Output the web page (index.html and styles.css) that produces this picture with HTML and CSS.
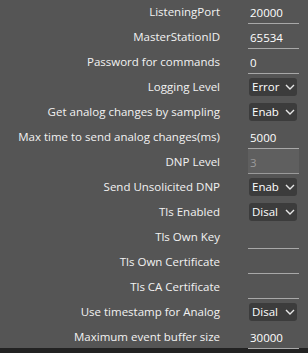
FILE: index.html
```html
<!DOCTYPE html>
<html lang="en">
<head>
  <meta charset="UTF-8">
  <title>DNP Settings</title>
  <link rel="stylesheet" href="styles.css">
</head>
<body>
  <div class="settings">
    <div class="row">
      <label>ListeningPort</label>
      <div class="field"><input class="text" type="text" value="20000"></div>
    </div>
    <div class="row">
      <label>MasterStationID</label>
      <div class="field"><input class="text" type="text" value="65534"></div>
    </div>
    <div class="row">
      <label>Password for commands</label>
      <div class="field"><input class="text" type="text" value="0"></div>
    </div>
    <div class="row">
      <label>Logging Level</label>
      <div class="field">
        <div class="select"><span class="sel-text">Error</span>
          <svg class="chev" width="10" height="6" viewBox="0 0 10 6"><path d="M1 1 L5 5 L9 1" fill="none" stroke="#e6e6e6" stroke-width="1.4"/></svg>
        </div>
      </div>
    </div>
    <div class="row">
      <label>Get analog changes by sampling</label>
      <div class="field">
        <div class="select"><span class="sel-text">Enab</span>
          <svg class="chev" width="10" height="6" viewBox="0 0 10 6"><path d="M1 1 L5 5 L9 1" fill="none" stroke="#e6e6e6" stroke-width="1.4"/></svg>
        </div>
      </div>
    </div>
    <div class="row">
      <label>Max time to send analog changes(ms)</label>
      <div class="field"><input class="text" type="text" value="5000"></div>
    </div>
    <div class="row">
      <label>DNP Level</label>
      <div class="field"><input class="text" type="text" value="3" disabled></div>
    </div>
    <div class="row">
      <label>Send Unsolicited DNP</label>
      <div class="field">
        <div class="select"><span class="sel-text">Enab</span>
          <svg class="chev" width="10" height="6" viewBox="0 0 10 6"><path d="M1 1 L5 5 L9 1" fill="none" stroke="#e6e6e6" stroke-width="1.4"/></svg>
        </div>
      </div>
    </div>
    <div class="row">
      <label>Tls Enabled</label>
      <div class="field">
        <div class="select"><span class="sel-text">Disal</span>
          <svg class="chev" width="10" height="6" viewBox="0 0 10 6"><path d="M1 1 L5 5 L9 1" fill="none" stroke="#e6e6e6" stroke-width="1.4"/></svg>
        </div>
      </div>
    </div>
    <div class="row">
      <label>Tls Own Key</label>
      <div class="field"><input class="text" type="text" value=""></div>
    </div>
    <div class="row">
      <label>Tls Own Certificate</label>
      <div class="field"><input class="text" type="text" value=""></div>
    </div>
    <div class="row">
      <label>Tls CA Certificate</label>
      <div class="field"><input class="text" type="text" value=""></div>
    </div>
    <div class="row">
      <label>Use timestamp for Analog</label>
      <div class="field">
        <div class="select"><span class="sel-text">Disal</span>
          <svg class="chev" width="10" height="6" viewBox="0 0 10 6"><path d="M1 1 L5 5 L9 1" fill="none" stroke="#e6e6e6" stroke-width="1.4"/></svg>
        </div>
      </div>
    </div>
    <div class="row">
      <label>Maximum event buffer size</label>
      <div class="field"><input class="text" type="text" value="30000"></div>
    </div>
  </div>
  <div class="footer"></div>
</body>
</html>
```

FILE: styles.css
```css
body {
  margin: 0;
  background-color: #555555;
  color: #f2f2f2;
  font-family: 'Open Sans', sans-serif;
  font-size: 11.5px;
  height: 353px;
  overflow: hidden;
}

.settings {
  margin-top: -1px;
  height: 349px;
}

.row {
  display: flex;
  align-items: center;
  height: 25px;
}

label {
  width: 220px;
  text-align: right;
  white-space: nowrap;
}

.field {
  margin-left: 28px;
  width: 51px;
  height: 25px;
  display: flex;
  align-items: center;
}

.text {
  box-sizing: border-box;
  width: 51px;
  height: 25px;
  padding: 3px 0 0 2px;
  margin: 0;
  border: none;
  border-bottom: 1px solid #a8a8a8;
  background: transparent;
  color: #ffffff;
  font-family: inherit;
  font-size: 11.5px;
  outline: none;
}

.text:disabled {
  background-color: #5f5f5f;
  color: #9a9a9a;
  border-bottom-color: #9a9a9a;
}

.select {
  display: flex;
  align-items: center;
  width: 48px;
  height: 18px;
  margin-left: 1px;
  background-color: #3c3c3c;
  border-radius: 3px;
  box-sizing: border-box;
  padding-left: 3px;
}

.sel-text {
  width: 29px;
  overflow: hidden;
  white-space: nowrap;
  color: #ffffff;
}

.chev {
  margin-left: 4px;
}

.footer {
  height: 5px;
  background-color: #222222;
}
```
